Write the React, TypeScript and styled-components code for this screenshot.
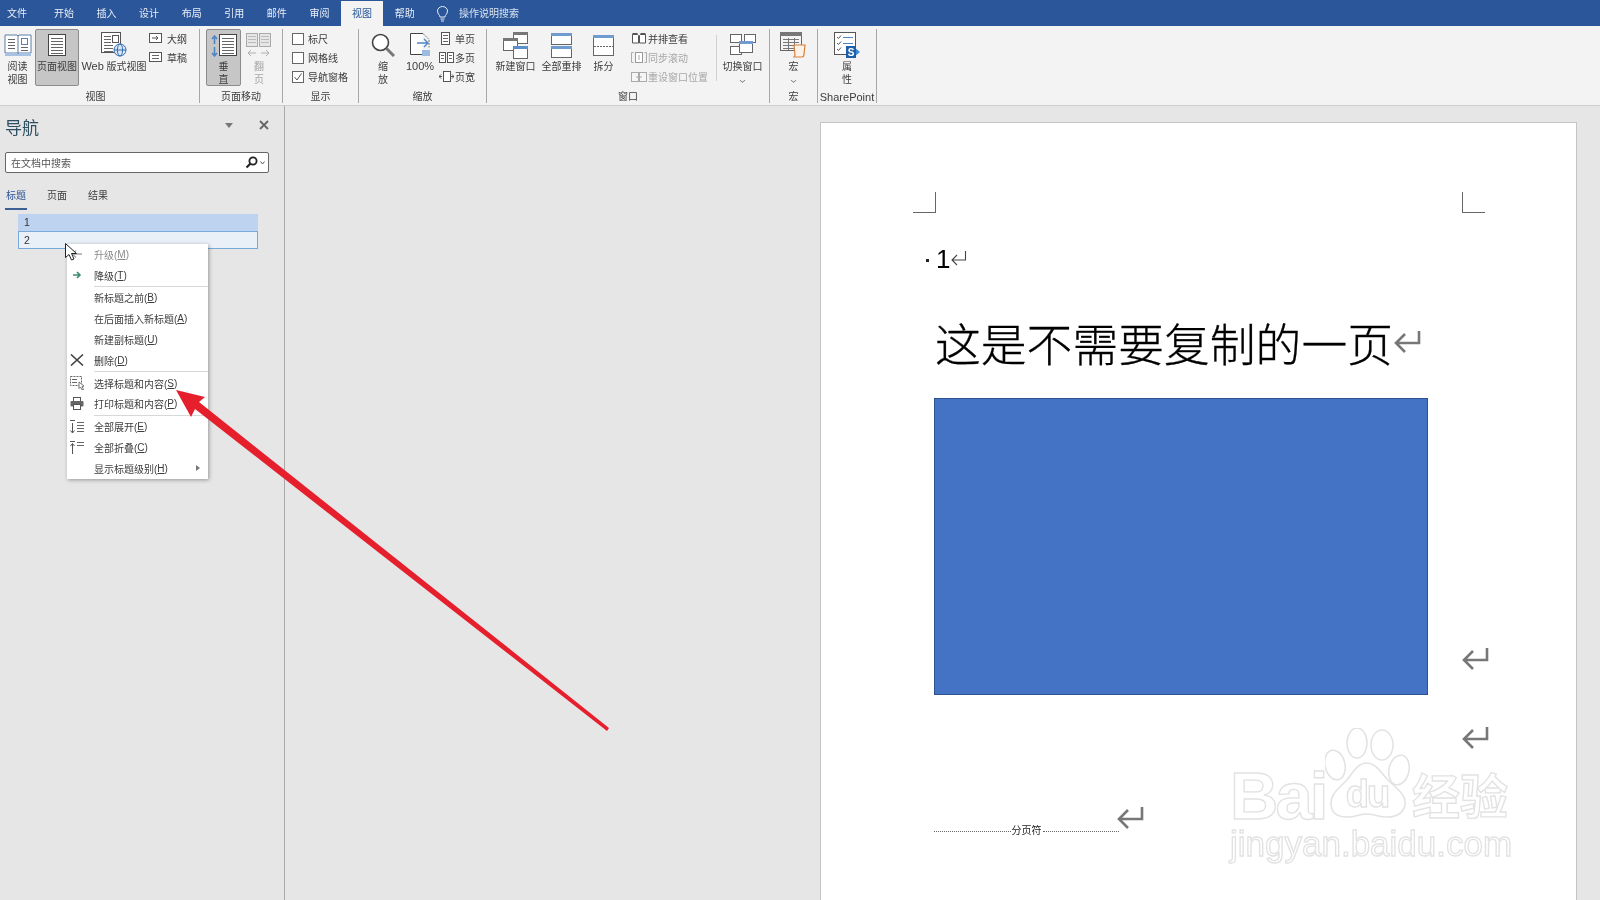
import React from 'react'
import styled, { createGlobalStyle } from 'styled-components'

const GlobalStyle = createGlobalStyle`
  html, body { margin: 0; padding: 0; height: 100%; background: #e6e6e6; }
  * { box-sizing: border-box; }
`

const Screen = styled.div`
  position: relative;
  width: 1600px;
  height: 900px;
  overflow: hidden;
  display: flex;
  flex-direction: column;
  background: #e6e6e6;
  color: #3c3c3c;
  font-family: "Liberation Sans", "Noto Sans CJK SC", sans-serif;
  font-size: 10px;
  filter: blur(0.35px);
`

const Latin = styled.span`
  font-size: 11px;
`

const TabBar = styled.div`
  height: 26px;
  flex: none;
  display: flex;
  align-items: flex-end;
  background: #2b579a;
`

const Tab = styled.div<{ $active?: boolean; $first?: boolean }>`
  width: 42.6px;
  height: ${(p) => (p.$active ? '25px' : '26px')};
  padding-left: ${(p) => (p.$first ? '7px' : '0')};
  padding-top: ${(p) => (p.$active ? '0' : '1px')};
  display: flex;
  align-items: center;
  justify-content: ${(p) => (p.$first ? 'flex-start' : 'center')};
  color: ${(p) => (p.$active ? '#2b579a' : '#e9eef7')};
  background: ${(p) => (p.$active ? '#f3f3f3' : 'transparent')};
  line-height: 1;
`

const TellMe = styled.div`
  height: 26px;
  margin-left: 10px;
  padding-top: 1px;
  display: flex;
  align-items: center;
  gap: 10px;
  color: #d9e3f1;
  line-height: 1;
`

const Ribbon = styled.div`
  height: 80px;
  flex: none;
  display: flex;
  align-items: flex-start;
  padding-top: 3px;
  background: #f3f3f3;
  border-bottom: 1px solid #cfcfcf;
`

const Group = styled.div<{ $w: number }>`
  width: ${(p) => p.$w}px;
  height: 74px;
  flex: none;
  display: flex;
  flex-direction: column;
  border-right: 1px solid #a8a8a8;
`

const GroupBody = styled.div<{ $pad?: number; $center?: boolean }>`
  height: 61px;
  display: flex;
  padding-left: ${(p) => p.$pad ?? 0}px;
  justify-content: ${(p) => (p.$center ? 'center' : 'flex-start')};
`

const GroupLabel = styled.div<{ $inset?: number }>`
  height: 13px;
  padding-right: ${(p) => p.$inset ?? 0}px;
  line-height: 14px;
  text-align: center;
  white-space: nowrap;
`

const BigButton = styled.div<{ $w: number; $selected?: boolean; $off?: boolean; $ml?: number }>`
  width: ${(p) => p.$w}px;
  height: 57px;
  flex: none;
  margin-left: ${(p) => p.$ml ?? 0}px;
  display: flex;
  flex-direction: column;
  align-items: center;
  border-radius: 2px;
  border: ${(p) => (p.$selected ? '1px solid #8c8c8c' : '1px solid transparent')};
  background: ${(p) => (p.$selected ? '#c6c6c6' : 'transparent')};
  color: ${(p) => (p.$off ? '#a6a6a6' : '#3c3c3c')};
`

const IconSlot = styled.div`
  height: 30px;
  flex: none;
  display: flex;
  align-items: center;
  justify-content: center;
`

const BigLabel = styled.div`
  line-height: 13px;
  text-align: center;
  white-space: pre;
`

const Chevron = styled.div`
  width: 5px;
  height: 5px;
  margin: 5px auto 0;
  border-right: 1px solid #666;
  border-bottom: 1px solid #666;
  transform: scale(0.8, 0.6) rotate(45deg);
`

const SmallColumn = styled.div<{ $ml?: number; $w?: number }>`
  margin-left: ${(p) => p.$ml ?? 0}px;
  width: ${(p) => (p.$w ? `${p.$w}px` : 'auto')};
  flex: none;
  display: flex;
  flex-direction: column;
`

const SmallButton = styled.div<{ $off?: boolean; $gap?: number }>`
  height: 19px;
  display: flex;
  align-items: center;
  gap: ${(p) => p.$gap ?? 3}px;
  white-space: nowrap;
  color: ${(p) => (p.$off ? '#a6a6a6' : '#3c3c3c')};
`

const Check = styled.div`
  width: 12px;
  height: 12px;
  flex: none;
  background: #fff;
  border: 1px solid #666;
  display: flex;
`

const VerticalRule = styled.div`
  width: 1px;
  height: 46px;
  flex: none;
  margin-top: 6px;
  background: #d0d0d0;
`

const Main = styled.div`
  flex: 1;
  min-height: 0;
  display: flex;
`

const NavPane = styled.div`
  position: relative;
  width: 285px;
  flex: none;
  padding: 0 5px;
  border-right: 1px solid #a9a9a9;
`

const NavHeader = styled.div`
  height: 46px;
  padding-right: 10px;
  display: flex;
  align-items: center;
  color: #2e5062;
  font-size: 17px;
`

const NavTitle = styled.div`
  flex: 1;
  margin-top: -5px;
`

const NavCaret = styled.div`
  width: 0;
  height: 0;
  margin: -8px 26px 0 0;
  border-left: 4px solid transparent;
  border-right: 4px solid transparent;
  border-top: 5px solid #777;
`

const NavClose = styled.svg`
  margin-top: -9px;
`

const SearchBox = styled.div`
  width: 264px;
  height: 21px;
  padding: 0 3px 0 5px;
  display: flex;
  align-items: center;
  justify-content: space-between;
  background: #fff;
  border: 1px solid #666;
  border-radius: 2px;
  color: #555;
`

const SearchTools = styled.div`
  display: flex;
  align-items: center;
  gap: 2px;
`

const NavTabs = styled.div`
  margin-top: 14px;
  display: flex;
  gap: 19px;
`

const NavTab = styled.div<{ $active?: boolean }>`
  width: 22px;
  height: 23px;
  line-height: 18px;
  text-align: center;
  border-bottom: 2px solid ${(p) => (p.$active ? '#3d5f96' : 'transparent')};
  color: ${(p) => (p.$active ? '#2f5597' : '#3c3c3c')};
`

const HeadingRow = styled.div<{ $current?: boolean }>`
  width: 240px;
  margin-left: 13px;
  height: ${(p) => (p.$current ? '18px' : '17px')};
  margin-top: ${(p) => (p.$current ? '0' : '4px')};
  padding-left: ${(p) => (p.$current ? '5px' : '6px')};
  line-height: 16px;
  font-size: 10.5px;
  color: #333;
  background: ${(p) => (p.$current ? '#eaf0f8' : '#bdd3ef')};
  border: ${(p) => (p.$current ? '1px solid #78a9d8' : 'none')};
`

const ContextMenu = styled.div`
  position: absolute;
  left: 67px;
  top: 138px;
  width: 141px;
  background: #fff;
  box-shadow: 1px 1px 4px rgba(0, 0, 0, 0.35);
  z-index: 2;
`

const MenuItem = styled.div<{ $off?: boolean }>`
  position: relative;
  height: 20.8px;
  display: flex;
  align-items: center;
  color: ${(p) => (p.$off ? '#8a8a8a' : '#3c3c3c')};
  white-space: nowrap;
`

const MenuGlyph = styled.div`
  width: 27px;
  flex: none;
  display: flex;
  justify-content: center;
  padding-right: 7px;
`

const MenuRule = styled.div`
  height: 1px;
  margin: 0.5px 0 0.5px 27px;
  background: #d8d8d8;
`

const SubArrow = styled.div`
  position: absolute;
  right: 8px;
  top: 7px;
  border-top: 3px solid transparent;
  border-bottom: 3px solid transparent;
  border-left: 4px solid #777;
`

const CursorMark = styled.svg`
  position: absolute;
  left: 65px;
  top: 137px;
  z-index: 3;
`

const Canvas = styled.div`
  flex: 1;
  min-width: 0;
  padding: 16px 0 0 535px;
`

const Page = styled.div`
  position: relative;
  width: 757px;
  height: 800px;
  padding-left: 102px;
  background: #fff;
  border: 1px solid #c4c4c4;
  color: #000;
`

const CropMark = styled.div<{ $right?: boolean }>`
  position: absolute;
  top: 69px;
  left: ${(p) => (p.$right ? '641px' : '92px')};
  width: 23px;
  height: 21px;
  border-bottom: 1px solid #666;
  border-right: ${(p) => (p.$right ? 'none' : '1px solid #666')};
  border-left: ${(p) => (p.$right ? '1px solid #666' : 'none')};
`

const HeadingOne = styled.div`
  margin-top: 121px;
  height: 30px;
  display: flex;
  align-items: center;
  font-size: 26px;
`

const Bullet = styled.span`
  width: 3px;
  height: 3px;
  margin: 2px 7px 0 3px;
  background: #222;
`

const Title = styled.div`
  margin: 43px 0 0 12px;
  height: 50px;
  display: flex;
  align-items: center;
  font-family: "Noto Sans CJK SC", sans-serif;
  font-size: 45.8px;
  font-weight: 300;
  line-height: 50px;
  white-space: nowrap;
  -webkit-text-stroke: 0.3px #000;
`

const ShapeRow = styled.div`
  margin: 31px 0 0 11px;
  display: flex;
  align-items: flex-end;
`

const BlueShape = styled.div`
  width: 494px;
  height: 297px;
  background: #4472c4;
  border: 1px solid #2f528f;
`

const ReturnAt = styled.div<{ $ml: number; $mt?: number; $mb?: number }>`
  margin-left: ${(p) => p.$ml}px;
  margin-top: ${(p) => p.$mt ?? 0}px;
  margin-bottom: ${(p) => p.$mb ?? 0}px;
  height: 24px;
  display: flex;
`

const BreakRow = styled.div`
  margin: 55px 0 0 11px;
  display: flex;
  align-items: flex-start;
`

const PageBreak = styled.div`
  width: 185px;
  margin-top: 20px;
  display: flex;
  align-items: center;
  gap: 1px;
  line-height: 12px;
  color: #222;
  white-space: nowrap;
`

const Dots = styled.div`
  flex: 1;
  border-top: 1px dotted #666;
`

const Watermark = styled.div`
  position: absolute;
  left: 409px;
  top: 605px;
  width: 295px;
  color: #fff;
  -webkit-text-stroke: 1.3px #e2e2e2;
`

const MarkTop = styled.div`
  display: flex;
  align-items: flex-end;
  height: 90px;
`

const MarkBai = styled.div`
  width: 95px;
  flex: none;
  margin-bottom: -3px;
  font-size: 67px;
  font-weight: 700;
  line-height: 50px;
  letter-spacing: -3px;
`

const MarkPaw = styled.div`
  position: relative;
  width: 85px;
  height: 90px;
  flex: none;
`

const MarkDu = styled.div`
  position: absolute;
  left: 10px;
  top: 46px;
  width: 64px;
  text-align: center;
  font-size: 38px;
  font-weight: 700;
  line-height: 40px;
  letter-spacing: -2px;
`

const MarkJing = styled.div`
  margin-left: 2px;
  font-family: "Noto Sans CJK SC", sans-serif;
  font-size: 48px;
  line-height: 50px;
  font-weight: 700;
  white-space: nowrap;
`

const MarkUrl = styled.div`
  margin-top: 9px;
  font-size: 35px;
  line-height: 34px;
  white-space: nowrap;
`

const ArrowOverlay = styled.svg`
  position: absolute;
  left: 0;
  top: 0;
  z-index: 5;
  pointer-events: none;
`

const D = '#555'

const Rows = ({ x, y, w, n, step = 3, c = '#666' }: { x: number; y: number; w: number; n: number; step?: number; c?: string }) => (
  <>
    {Array.from({ length: n }, (_, i) => (
      <line key={i} x1={x} x2={x + w} y1={y + i * step + 0.5} y2={y + i * step + 0.5} stroke={c} />
    ))}
  </>
)

const icons: Record<string, { w: number; h: number; body: React.ReactNode }> = {
  read: {
    w: 28, h: 24, body: (
      <>
        <path d="M1 20V2h12l1 1 1-1h12v18z" fill="#fff" stroke="#5d7fa8" />
        <rect x="1" y="20" width="26" height="3" fill="#a8c3e2" />
        <line x1="14" y1="3" x2="14" y2="21" stroke="#5d7fa8" />
        <Rows x={4} y={6} w={7} n={4} />
        <Rows x={17} y={14} w={7} n={2} />
        <rect x="17.5" y="5.5" width="6" height="6" fill="#fff" stroke="#5d7fa8" />
      </>
    ),
  },
  page: {
    w: 18, h: 22, body: (
      <>
        <rect x="0.5" y="0.5" width="17" height="21" fill="#fff" stroke="#444" />
        <Rows x={3} y={4} w={12} n={6} />
      </>
    ),
  },
  web: {
    w: 28, h: 26, body: (
      <>
        <rect x="1.5" y="0.5" width="19" height="20" fill="#fff" stroke="#555" />
        <Rows x={4} y={4} w={7} n={3} />
        <Rows x={4} y={13} w={9} n={3} />
        <rect x="12.5" y="3.5" width="6" height="7" fill="#fff" stroke="#555" />
        <circle cx="20" cy="18" r="6" fill="#dbe7f5" stroke="#2f6db0" />
        <ellipse cx="20" cy="18" rx="2.6" ry="6" fill="none" stroke="#2f6db0" />
        <line x1="14" y1="18" x2="26" y2="18" stroke="#2f6db0" />
      </>
    ),
  },
  outline: {
    w: 14, h: 11, body: (
      <>
        <rect x="0.5" y="0.5" width="12" height="9" fill="#fff" stroke={D} />
        <path d="M3 5h6M7 3l2 2-2 2" fill="none" stroke={D} />
      </>
    ),
  },
  draft: {
    w: 14, h: 11, body: (
      <>
        <rect x="0.5" y="0.5" width="12" height="9" fill="#fff" stroke={D} />
        <Rows x={3} y={3} w={7} n={2} />
      </>
    ),
  },
  vertical: {
    w: 28, h: 23, body: (
      <>
        <path d="M4.5 2v8M2 5l2.5-3L7 5M4.5 13v9M2 19l2.5 3L7 19" fill="none" stroke="#4f86c6" strokeWidth="1.6" />
        <rect x="9.5" y="0.5" width="17" height="21" fill="#fff" stroke="#444" />
        <Rows x={12} y={4} w={12} n={6} />
      </>
    ),
  },
  flip: {
    w: 26, h: 24, body: (
      <>
        <rect x="0.5" y="0.5" width="11" height="13" fill="#e6e6e6" stroke="#aaa" />
        <rect x="13.5" y="0.5" width="11" height="13" fill="#e6e6e6" stroke="#aaa" />
        <Rows x={2} y={3} w={8} n={3} c="#bbb" />
        <Rows x={15} y={3} w={8} n={3} c="#bbb" />
        <path d="M2 20h8M5 17l-3 3 3 3M15 20h8M20 17l3 3-3 3" fill="none" stroke="#b0b0b0" />
      </>
    ),
  },
  zoom: {
    w: 24, h: 24, body: (
      <>
        <circle cx="9.5" cy="9.5" r="8" fill="#fff" stroke="#444" strokeWidth="1.6" />
        <line x1="15.5" y1="15.5" x2="23" y2="23" stroke="#777" strokeWidth="3" />
      </>
    ),
  },
  hundred: {
    w: 22, h: 24, body: (
      <>
        <path d="M14 0.5H1.5V21.5H13" fill="#fff" stroke="#444" />
        <path d="M14 0.5l6 6v8" fill="none" stroke="#777" strokeDasharray="2 1" />
        <path d="M8 10h11M15 6l4 4-4 4" fill="none" stroke="#4f86c6" strokeWidth="1.4" />
        <rect x="13" y="17" width="8" height="6" fill="#9dbbe0" />
      </>
    ),
  },
  single: {
    w: 13, h: 13, body: (
      <>
        <rect x="2.5" y="0.5" width="8" height="12" fill="#fff" stroke="#555" />
        <Rows x={4} y={3} w={5} n={3} />
      </>
    ),
  },
  multi: {
    w: 15, h: 13, body: (
      <>
        <rect x="0.5" y="1.5" width="6" height="10" fill="#fff" stroke="#555" />
        <rect x="8.5" y="1.5" width="6" height="10" fill="#fff" stroke="#555" />
        <Rows x={2} y={4} w={3} n={2} />
        <Rows x={10} y={4} w={3} n={2} />
      </>
    ),
  },
  wide: {
    w: 15, h: 13, body: (
      <>
        <rect x="4.5" y="1.5" width="7" height="10" fill="#fff" stroke="#555" />
        <path d="M3 6.5H0M2 4.5L0 6.5l2 2M12 6.5h3M13 4.5l2 2-2 2" fill="none" stroke="#555" />
      </>
    ),
  },
  newwin: {
    w: 25, h: 27, body: (
      <>
        <rect x="10.5" y="0.5" width="14" height="11" fill="#fff" stroke="#666" />
        <rect x="10" y="0" width="15" height="3" fill="#777" />
        <rect x="0.5" y="6.5" width="14" height="12" fill="#fff" stroke="#666" />
        <rect x="0" y="6" width="15" height="3" fill="#777" />
        <rect x="10.5" y="14.5" width="14" height="12" fill="#fff" stroke="#666" />
        <rect x="10" y="14" width="15" height="3" fill="#5b8fc9" />
      </>
    ),
  },
  arrange: {
    w: 21, h: 25, body: (
      <>
        <rect x="0.5" y="0.5" width="20" height="11" fill="#fff" stroke="#666" />
        <rect x="0" y="0" width="21" height="3" fill="#6f9bd0" />
        <rect x="0.5" y="13.5" width="20" height="11" fill="#fff" stroke="#666" />
        <rect x="0" y="13" width="21" height="3" fill="#6f9bd0" />
      </>
    ),
  },
  split: {
    w: 21, h: 21, body: (
      <>
        <rect x="0.5" y="0.5" width="20" height="20" fill="#fff" stroke="#666" />
        <rect x="0" y="0" width="21" height="3" fill="#6f9bd0" />
        <line x1="1" y1="11.5" x2="20" y2="11.5" stroke="#666" strokeDasharray="2 1" />
      </>
    ),
  },
  sidebyside: {
    w: 16, h: 13, body: (
      <>
        <path d="M1.5 11V2.5h5l1 1v7.5zM8.5 11V3.5l1-1h5V11z" fill="#fff" stroke="#555" />
        <path d="M1.5 2h5M9.5 2h5" stroke="#555" strokeWidth="2" />
      </>
    ),
  },
  sync: {
    w: 16, h: 13, body: (
      <>
        <path d="M2.5 1.5h-2v10h2M13.5 1.5h2v10h-2" fill="none" stroke="#aaa" />
        <rect x="4.5" y="1.5" width="7" height="10" fill="#fff" stroke="#999" />
        <path d="M8 4v5" stroke="#aaa" />
      </>
    ),
  },
  reset: {
    w: 16, h: 13, body: (
      <>
        <rect x="0.5" y="2.5" width="7" height="9" fill="#f5f5f5" stroke="#aaa" />
        <rect x="8.5" y="2.5" width="7" height="9" fill="#f5f5f5" stroke="#aaa" />
        <path d="M5 7h6" stroke="#aaa" />
      </>
    ),
  },
  switchwin: {
    w: 26, h: 22, body: (
      <>
        <rect x="0.5" y="0.5" width="11" height="8" fill="#fff" stroke="#666" />
        <rect x="14.5" y="0.5" width="11" height="8" fill="#fff" stroke="#666" />
        <rect x="0.5" y="12.5" width="11" height="8" fill="#fff" stroke="#666" />
        <rect x="9.5" y="7.5" width="13" height="11" fill="#fff" stroke="#666" />
        <rect x="9" y="7" width="14" height="3" fill="#6f9bd0" />
      </>
    ),
  },
  macro: {
    w: 27, h: 26, body: (
      <>
        <rect x="0.5" y="0.5" width="21" height="18" fill="#f4f4f4" stroke="#666" />
        <rect x="0" y="0" width="22" height="4" fill="#777" />
        <Rows x={3} y={7} w={16} n={4} step={3} c="#777" />
        <path d="M8.500 6v12M14.500 6v12" stroke="#777" />
        <path d="M14 13h11l-1 9c0 2-1 3-2 3h-8l1-2z" fill="#fbf3ea" stroke="#d9803a" strokeWidth="1.2" />
      </>
    ),
  },
  props: {
    w: 26, h: 27, body: (
      <>
        <rect x="0.5" y="0.5" width="21" height="22" fill="#fff" stroke="#555" />
        <path d="M3 5l1.5 1.5L7 3.5M3 11l1.5 1.5L7 9.5M3 17l1.5 1.5L7 15.5" fill="none" stroke="#555" />
        <Rows x={9} y={5} w={10} n={2} step={6} c="#4f86c6" />
        <path d="M20 15l6 5-6 5z" fill="#3d8bd4" />
        <rect x="12" y="14" width="10" height="12" fill="#1f5fa8" />
        <text x="17" y="24" textAnchor="middle" fontSize="10" fontWeight="700" fill="#fff">S</text>
      </>
    ),
  },
  up: {
    w: 12, h: 10, body: <path d="M11 5H2M5 1.5L1.5 5 5 8.5" fill="none" stroke="#a8a8a8" strokeWidth="1.4" />,
  },
  down: {
    w: 10, h: 10, body: <path d="M1 5h7M5 2l3 3-3 3" fill="none" stroke="#3f8a70" strokeWidth="1.6" />,
  },
  del: {
    w: 14, h: 12, body: <path d="M1 0.5l12 11M13 0.5l-12 11" fill="none" stroke="#444" strokeWidth="1.6" />,
  },
  select: {
    w: 15, h: 14, body: (
      <>
        <rect x="0.5" y="0.5" width="11" height="9" fill="none" stroke="#666" strokeDasharray="2 1" />
        <Rows x={2} y={3} w={5} n={2} />
        <path d="M9 6l5 4-2 .5 1.5 3-1.5.5-1.5-3-1.5 1.5z" fill="#fff" stroke="#555" strokeWidth="0.8" />
      </>
    ),
  },
  print: {
    w: 14, h: 13, body: (
      <>
        <rect x="3.5" y="0.5" width="7" height="4" fill="#fff" stroke="#555" />
        <rect x="0.5" y="4" width="13" height="5.5" rx="1" fill="#666" />
        <rect x="3.5" y="7.5" width="7" height="5" fill="#fff" stroke="#555" />
      </>
    ),
  },
  expand: {
    w: 14, h: 14, body: (
      <>
        <path d="M0 0.5h5M2.5 3v10M0.5 10.5l2 2.5 2-2.5" fill="none" stroke="#555" />
        <Rows x={7} y={2} w={7} n={4} step={3} />
      </>
    ),
  },
  collapse: {
    w: 14, h: 14, body: (
      <>
        <path d="M2.5 13V3M0.5 5l2-2.5 2 2.5M0 0.5h5" fill="none" stroke="#555" />
        <Rows x={7} y={1} w={7} n={2} step={3} />
      </>
    ),
  },
  bulb: {
    w: 13, h: 16, body: (
      <>
        <path d="M4 11c0-2-2.500-3-2.500-6a5 4.500 0 0 1 10 0c0 3-2.500 4-2.500 6z" fill="none" stroke="#e6ecf5" />
        <path d="M4.500 13h4M5 15h3" stroke="#e6ecf5" />
      </>
    ),
  },
}

const Icon = ({ name }: { name: string }) => {
  const i = icons[name]
  return (
    <svg width={i.w} height={i.h} viewBox={`0 0 ${i.w} ${i.h}`}>
      {i.body}
    </svg>
  )
}

const ReturnMark = ({ size = 'big' }: { size?: 'big' | 'small' }) =>
  size === 'big' ? (
    <svg width="28" height="24" viewBox="0 0 28 24">
      <path d="M26 1v12H3M12 4l-9 9 9 9" fill="none" stroke="#777" strokeWidth="2.6" />
    </svg>
  ) : (
    <svg width="17" height="18" viewBox="0 0 17 18">
      <path d="M15.500 1v9H2M7 5l-5 5 5 5" fill="none" stroke="#444" strokeWidth="1.1" />
    </svg>
  )

const TABS = ['开始', '插入', '设计', '布局', '引用', '邮件', '审阅', '视图', '帮助']

const MENU: Array<{ icon?: string; text: string; key: string; off?: boolean; rule?: boolean; more?: boolean }> = [
  { icon: 'up', text: '升级', key: 'M', off: true },
  { icon: 'down', text: '降级', key: 'T', rule: true },
  { text: '新标题之前', key: 'B' },
  { text: '在后面插入新标题', key: 'A' },
  { text: '新建副标题', key: 'U' },
  { icon: 'del', text: '删除', key: 'D', rule: true },
  { icon: 'select', text: '选择标题和内容', key: 'S' },
  { icon: 'print', text: '打印标题和内容', key: 'P', rule: true },
  { icon: 'expand', text: '全部展开', key: 'E' },
  { icon: 'collapse', text: '全部折叠', key: 'C' },
  { text: '显示标题级别', key: 'H', more: true },
]

const CheckOption = ({ label, checked }: { label: string; checked?: boolean }) => (
  <SmallButton $gap={4}>
    <Check>
      {checked && (
        <svg width="10" height="10" viewBox="0 0 10 10">
          <path d="M1.500 5l2.500 3 4.500-6.500" fill="none" stroke="#555" />
        </svg>
      )}
    </Check>
    {label}
  </SmallButton>
)

const App: React.FC = () => {
  return (
    <Screen>
      <GlobalStyle />
      <TabBar>
        <Tab $first>文件</Tab>
        {TABS.map((t) => (
          <Tab key={t} $active={t === '视图'}>{t}</Tab>
        ))}
        <TellMe>
          <Icon name="bulb" />
          操作说明搜索
        </TellMe>
      </TabBar>

      <Ribbon>
        <Group $w={200}>
          <GroupBody $pad={1}>
            <BigButton $w={33}>
              <IconSlot><Icon name="read" /></IconSlot>
              <BigLabel>{'阅读\n视图'}</BigLabel>
            </BigButton>
            <BigButton $w={44} $ml={1} $selected>
              <IconSlot><Icon name="page" /></IconSlot>
              <BigLabel>页面视图</BigLabel>
            </BigButton>
            <BigButton $w={66} $ml={2}>
              <IconSlot><Icon name="web" /></IconSlot>
              <BigLabel><Latin>Web</Latin> 版式视图</BigLabel>
            </BigButton>
            <SmallColumn $ml={2}>
              <SmallButton $gap={4}><Icon name="outline" />大纲</SmallButton>
              <SmallButton $gap={4}><Icon name="draft" />草稿</SmallButton>
            </SmallColumn>
          </GroupBody>
          <GroupLabel $inset={8}>视图</GroupLabel>
        </Group>

        <Group $w={83}>
          <GroupBody $pad={6}>
            <BigButton $w={35} $selected>
              <IconSlot><Icon name="vertical" /></IconSlot>
              <BigLabel>{'垂\n直'}</BigLabel>
            </BigButton>
            <BigButton $w={36} $off>
              <IconSlot><Icon name="flip" /></IconSlot>
              <BigLabel>{'翻\n页'}</BigLabel>
            </BigButton>
          </GroupBody>
          <GroupLabel>页面移动</GroupLabel>
        </Group>

        <Group $w={76}>
          <GroupBody $pad={9}>
            <SmallColumn>
              <CheckOption label="标尺" />
              <CheckOption label="网格线" />
              <CheckOption label="导航窗格" checked />
            </SmallColumn>
          </GroupBody>
          <GroupLabel>显示</GroupLabel>
        </Group>

        <Group $w={128}>
          <GroupBody $pad={1}>
            <BigButton $w={46}>
              <IconSlot><Icon name="zoom" /></IconSlot>
              <BigLabel>{'缩\n放'}</BigLabel>
            </BigButton>
            <BigButton $w={28}>
              <IconSlot><Icon name="hundred" /></IconSlot>
              <BigLabel><Latin>100%</Latin></BigLabel>
            </BigButton>
            <SmallColumn $ml={5}>
              <SmallButton><Icon name="single" />单页</SmallButton>
              <SmallButton $gap={1}><Icon name="multi" />多页</SmallButton>
              <SmallButton $gap={1}><Icon name="wide" />页宽</SmallButton>
            </SmallColumn>
          </GroupBody>
          <GroupLabel>缩放</GroupLabel>
        </Group>

        <Group $w={283}>
          <GroupBody $pad={8}>
            <BigButton $w={41}>
              <IconSlot><Icon name="newwin" /></IconSlot>
              <BigLabel>新建窗口</BigLabel>
            </BigButton>
            <BigButton $w={41} $ml={5}>
              <IconSlot><Icon name="arrange" /></IconSlot>
              <BigLabel>全部重排</BigLabel>
            </BigButton>
            <BigButton $w={41} $ml={1}>
              <IconSlot><Icon name="split" /></IconSlot>
              <BigLabel>拆分</BigLabel>
            </BigButton>
            <SmallColumn $ml={7} $w={85}>
              <SmallButton $gap={1}><Icon name="sidebyside" />并排查看</SmallButton>
              <SmallButton $gap={1} $off><Icon name="sync" />同步滚动</SmallButton>
              <SmallButton $gap={1} $off><Icon name="reset" />重设窗口位置</SmallButton>
            </SmallColumn>
            <VerticalRule />
            <BigButton $w={41} $ml={5}>
              <IconSlot><Icon name="switchwin" /></IconSlot>
              <BigLabel>切换窗口</BigLabel>
              <Chevron />
            </BigButton>
          </GroupBody>
          <GroupLabel>窗口</GroupLabel>
        </Group>

        <Group $w={48}>
          <GroupBody $center>
            <BigButton $w={40}>
              <IconSlot><Icon name="macro" /></IconSlot>
              <BigLabel>宏</BigLabel>
              <Chevron />
            </BigButton>
          </GroupBody>
          <GroupLabel>宏</GroupLabel>
        </Group>

        <Group $w={59}>
          <GroupBody $center>
            <BigButton $w={40}>
              <IconSlot><Icon name="props" /></IconSlot>
              <BigLabel>{'属\n性'}</BigLabel>
            </BigButton>
          </GroupBody>
          <GroupLabel><Latin>SharePoint</Latin></GroupLabel>
        </Group>
      </Ribbon>

      <Main>
        <NavPane>
          <NavHeader>
            <NavTitle>导航</NavTitle>
            <NavCaret />
            <NavClose width="10" height="10" viewBox="0 0 10 10">
              <path d="M1 1l8 8M9 1l-8 8" stroke="#666" strokeWidth="1.8" />
            </NavClose>
          </NavHeader>
          <SearchBox>
            在文档中搜索
            <SearchTools>
              <svg width="13" height="13" viewBox="0 0 13 13">
                <circle cx="8" cy="5" r="3.600" fill="none" stroke="#222" strokeWidth="1.800" />
                <line x1="5.500" y1="7.500" x2="1.500" y2="11.500" stroke="#222" strokeWidth="2.200" />
              </svg>
              <svg width="5" height="4" viewBox="0 0 5 4">
                <path d="M0.500 0.500l2 2.500 2-2.500" fill="none" stroke="#555" />
              </svg>
            </SearchTools>
          </SearchBox>
          <NavTabs>
            <NavTab $active>标题</NavTab>
            <NavTab>页面</NavTab>
            <NavTab>结果</NavTab>
          </NavTabs>
          <HeadingRow>1</HeadingRow>
          <HeadingRow $current>2</HeadingRow>

          <CursorMark width="14" height="18" viewBox="0 0 14 18">
            <path d="M0.500 0.500v14l3.500-3 2.500 5.500 2.500-1-2.500-5.500h5z" fill="#fff" stroke="#222" />
          </CursorMark>
          <ContextMenu>
            {MENU.map((m) => (
              <React.Fragment key={m.key}>
                <MenuItem $off={m.off}>
                  <MenuGlyph>{m.icon && <Icon name={m.icon} />}</MenuGlyph>
                  {m.text}(<u>{m.key}</u>)
                  {m.more && <SubArrow />}
                </MenuItem>
                {m.rule && <MenuRule />}
              </React.Fragment>
            ))}
          </ContextMenu>
        </NavPane>

        <Canvas>
          <Page>
            <CropMark />
            <CropMark $right />
            <HeadingOne>
              <Bullet />1<ReturnMark size="small" />
            </HeadingOne>
            <Title>
              这是不需要复制的一页
              <ReturnMark />
            </Title>
            <ShapeRow>
              <BlueShape />
              <ReturnAt $ml={33} $mb={24}><ReturnMark /></ReturnAt>
            </ShapeRow>
            <ReturnAt $ml={538} $mt={31}><ReturnMark /></ReturnAt>
            <BreakRow>
              <PageBreak>
                <Dots />
                分页符
                <Dots />
              </PageBreak>
              <ReturnAt $ml={-3} $mt={1}><ReturnMark /></ReturnAt>
            </BreakRow>
            <Watermark>
              <MarkTop>
                <MarkBai>Bai</MarkBai>
                <MarkPaw>
                  <svg width="85" height="90" viewBox="0 0 85 90">
                    <g fill="#fff" stroke="#e2e2e2" strokeWidth="1.500">
                      <ellipse cx="10" cy="37" rx="10" ry="15" transform="rotate(-12 10 37)" />
                      <ellipse cx="32" cy="15" rx="10" ry="15" />
                      <ellipse cx="57" cy="17" rx="11" ry="15" />
                      <ellipse cx="74" cy="42" rx="10" ry="15" transform="rotate(12 74 42)" />
                      <path d="M42 35c9 0 14 10 21 17 8 8 19 15 17 25-2 9-9 12-18 12-8 0-13-3-20-3s-12 3-20 3c-10 0-16-4-16-14 0-9 8-15 15-22 7-8 11-18 21-18z" />
                    </g>
                  </svg>
                  <MarkDu>du</MarkDu>
                </MarkPaw>
                <MarkJing>经验</MarkJing>
              </MarkTop>
              <MarkUrl>jingyan.baidu.com</MarkUrl>
            </Watermark>
          </Page>
        </Canvas>
      </Main>

      <ArrowOverlay width="1600" height="900" viewBox="0 0 1600 900">
        <path d="M176 390L205 397 199 402 609 728 607 731 195 409 191 417Z" fill="#e61f2d" />
      </ArrowOverlay>
    </Screen>
  )
}

export default App
